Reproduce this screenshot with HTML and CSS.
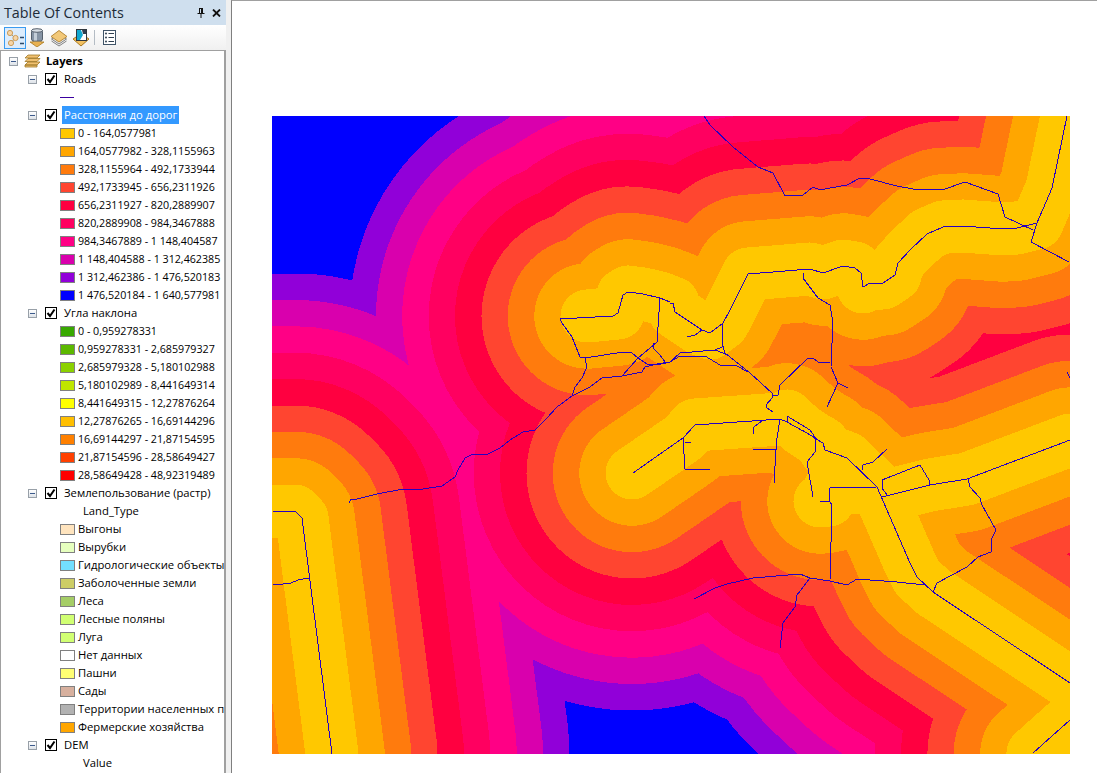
FILE: index.html
```html
<!DOCTYPE html>
<html lang="en">
<head>
  <meta charset="UTF-8" />
  <title>Table Of Contents</title>
  <link rel="stylesheet" href="styles.css">
</head>
<body>
  <svg class="sprite">
    <symbol id="check" viewBox="0 0 10 10">
      <path d="M1.5 5 L4 8 L8.5 1.5" fill="none" stroke="#000" stroke-width="2"/>
    </symbol>
  </svg>

  <div class="page">
    <div class="toc">
      <div class="titlebar">
        <span class="title">Table Of Contents</span>
        <svg class="title-icon" width="8" height="10" viewBox="0 0 8 10">
          <path d="M2 0.5H6M2.5 0.5V5.5M5.5 0.5V5.5M0.5 5.5H7.5M4 5.5V10" fill="none" stroke="#111" stroke-width="1"/>
          <rect x="4" y="1" width="1.2" height="4.5" fill="#111"/>
        </svg>
        <svg class="title-icon" width="9" height="8" viewBox="0 0 9 8">
          <path d="M1 0.5L8 7.5M8 0.5L1 7.5" fill="none" stroke="#111" stroke-width="1.8"/>
        </svg>
      </div>

      <div class="toolbar">
        <div class="tool active">
          <svg width="18" height="18" viewBox="0 0 18 18">
            <path d="M4 4L9 9L5 14" fill="none" stroke="#9a9a80" stroke-width="1"/>
            <circle cx="4" cy="4" r="2.6" fill="#f6d6a8" stroke="#cc9c58"/>
            <circle cx="9.5" cy="9" r="2.6" fill="#f6d6a8" stroke="#cc9c58"/>
            <circle cx="5" cy="14" r="2.6" fill="#f6d6a8" stroke="#cc9c58"/>
            <path d="M14 8.5H18M14 14.5H18" stroke="#2c4a6a" stroke-width="1.6"/>
          </svg>
        </div>
        <div class="tool">
          <svg width="16" height="19" viewBox="0 0 16 19">
            <path d="M4 12H12V14H15L8 19L1 14H4Z" fill="#e8b050" stroke="#a87820" stroke-width="0.8"/>
            <rect x="2.5" y="1.5" width="11" height="11.5" rx="2" fill="#8694a4" stroke="#56606c"/>
            <rect x="5" y="3" width="3" height="9.5" fill="#c4ced8"/>
            <ellipse cx="8" cy="2.5" rx="5.5" ry="1.8" fill="#d8dee4" stroke="#56606c"/>
          </svg>
        </div>
        <div class="tool">
          <svg width="18" height="18" viewBox="0 0 18 18">
            <path d="M1.5 10L9 5L16.5 10L9 15Z" fill="#e8e8e8" stroke="#808080"/>
            <path d="M1.5 12L9 17L16.5 12" fill="none" stroke="#808080"/>
            <path d="M1 7.5L9 1.5L17 7.5L9 13Z" fill="#f2c878" stroke="#b88a3a"/>
          </svg>
        </div>
        <div class="tool">
          <svg width="18" height="18" viewBox="0 0 18 18">
            <path d="M1 10L4 8H14L17 10L9 17Z" fill="#f2c060" stroke="#a87820"/>
            <rect x="4.5" y="0.5" width="10" height="11" fill="#fff" stroke="#303840"/>
            <path d="M5 1H9L11 6L8 11H5Z" fill="#10a8d0"/>
            <path d="M10 1H14V5H11Z" fill="#304050"/>
          </svg>
        </div>
        <div class="sep"></div>
        <div class="tool">
          <svg width="13" height="15" viewBox="0 0 13 15">
            <rect x="0.5" y="0.5" width="12" height="14" fill="#fff" stroke="#405468"/>
            <circle cx="3" cy="3.5" r="1" fill="#304050"/>
            <circle cx="3" cy="7.5" r="1" fill="#304050"/>
            <circle cx="3" cy="11.5" r="1" fill="#304050"/>
            <path d="M5.5 3.5H11M5.5 7.5H11M5.5 11.5H11" stroke="#304050"/>
          </svg>
        </div>
      </div>

      <div class="tree">
        <div class="row root">
          <span class="exp"></span>
          <svg class="layers-icon" width="17" height="14" viewBox="0 0 17 14">
            <path d="M4 1H16L13 4H1ZM4 4.5H16L13 7.5H1ZM4 8H16L13 11H1Z M1 11H13V13H1Z" fill="#f0c070" stroke="#a07828" stroke-width="0.8"/>
          </svg>
          <b class="root-name">Layers</b>
        </div>

        <div class="row layer"><span class="exp"></span><span class="chk"><svg width="10" height="10"><use href="#check"/></svg></span><span class="name">Roads</span></div>
        <div class="row legend"><span class="dash"></span></div>

        <div class="row layer"><span class="exp"></span><span class="chk"><svg width="10" height="10"><use href="#check"/></svg></span><span class="name selected">Расстояния до дорог</span></div>
        <div class="row legend num"><span class="sw d1"></span>0 - 164,0577981</div>
        <div class="row legend num"><span class="sw d2"></span>164,0577982 - 328,1155963</div>
        <div class="row legend num"><span class="sw d3"></span>328,1155964 - 492,1733944</div>
        <div class="row legend num"><span class="sw d4"></span>492,1733945 - 656,2311926</div>
        <div class="row legend num"><span class="sw d5"></span>656,2311927 - 820,2889907</div>
        <div class="row legend num"><span class="sw d6"></span>820,2889908 - 984,3467888</div>
        <div class="row legend num"><span class="sw d7"></span>984,3467889 - 1 148,404587</div>
        <div class="row legend num"><span class="sw d8"></span>1 148,404588 - 1 312,462385</div>
        <div class="row legend num"><span class="sw d9"></span>1 312,462386 - 1 476,520183</div>
        <div class="row legend num"><span class="sw d10"></span>1 476,520184 - 1 640,577981</div>

        <div class="row layer"><span class="exp"></span><span class="chk"><svg width="10" height="10"><use href="#check"/></svg></span><span class="name">Угла наклона</span></div>
        <div class="row legend num"><span class="sw s1"></span>0 - 0,959278331</div>
        <div class="row legend num"><span class="sw s2"></span>0,959278331 - 2,685979327</div>
        <div class="row legend num"><span class="sw s3"></span>2,685979328 - 5,180102988</div>
        <div class="row legend num"><span class="sw s4"></span>5,180102989 - 8,441649314</div>
        <div class="row legend num"><span class="sw s5"></span>8,441649315 - 12,27876264</div>
        <div class="row legend num"><span class="sw s6"></span>12,27876265 - 16,69144296</div>
        <div class="row legend num"><span class="sw s7"></span>16,69144297 - 21,87154595</div>
        <div class="row legend num"><span class="sw s8"></span>21,87154596 - 28,58649427</div>
        <div class="row legend num"><span class="sw s9"></span>28,58649428 - 48,92319489</div>

        <div class="row layer"><span class="exp"></span><span class="chk"><svg width="10" height="10"><use href="#check"/></svg></span><span class="name">Землепользование (растр)</span></div>
        <div class="row field">Land_Type</div>
        <div class="row legend"><span class="sw l1"></span>Выгоны</div>
        <div class="row legend"><span class="sw l2"></span>Вырубки</div>
        <div class="row legend"><span class="sw l3"></span>Гидрологические объекты</div>
        <div class="row legend"><span class="sw l4"></span>Заболоченные земли</div>
        <div class="row legend"><span class="sw l5"></span>Леса</div>
        <div class="row legend"><span class="sw l6"></span>Лесные поляны</div>
        <div class="row legend"><span class="sw l6"></span>Луга</div>
        <div class="row legend"><span class="sw l7"></span>Нет данных</div>
        <div class="row legend"><span class="sw l8"></span>Пашни</div>
        <div class="row legend"><span class="sw l9"></span>Сады</div>
        <div class="row legend"><span class="sw l10"></span>Территории населенных п</div>
        <div class="row legend"><span class="sw d2"></span>Фермерские хозяйства</div>

        <div class="row layer"><span class="exp"></span><span class="chk"><svg width="10" height="10"><use href="#check"/></svg></span><span class="name">DEM</span></div>
        <div class="row field">Value</div>
      </div>
    </div>

    <div class="splitter"></div>

    <div class="map-area">
      <svg class="map" width="798" height="638" viewBox="272 116 798 638">
        <defs>
          <!-- roads the distance raster was built from -->
          <path id="src" d="M272 511L295 511L302 518L332 754
            M1067 116L1052 188L1037 223L1017 228L1003 229L963 226L943 227L927 234L910 250L898 263L895 275L883 283L870 283L863 287L861 273L855 268L843 266L823 273L810 269L748 274L730 310L723 323L710 333L702 330L675 312L673 303L660 298L643 294L628 292L623 295L618 313L587 316
            M632 473L670 447L683 438L695 425L780 419L787 416L802 430L816 439L823 443L825 450L847 458L877 487L890 517L910 563L917 577L933 592L1070 683
            M882 497L930 485L967 479L1070 440
            M877 487L830 488L829 500L820 501
            M1070 720L1033 753"/>
        </defs>

        <rect class="bg" x="272" y="116" width="798" height="638"/>
        <g class="bands">
          <use href="#src" stroke="#9100d9" stroke-width="475"/>
          <use href="#src" stroke="#d900ad" stroke-width="422"/>
          <use href="#src" stroke="#ff0085" stroke-width="369.5"/>
          <use href="#src" stroke="#ff0060" stroke-width="316.5"/>
          <use href="#src" stroke="#ff0040" stroke-width="264"/>
          <use href="#src" stroke="#ff4530" stroke-width="211"/>
          <use href="#src" stroke="#ff7b0d" stroke-width="158.5"/>
          <use href="#src" stroke="#ffa600" stroke-width="105.5"/>
          <use href="#src" stroke="#ffc800" stroke-width="53"/>
        </g>

        <g class="roads">
          <path d="M273 511L295 511L302 518L332 754"/>
          <path d="M273 585L283 584L291 583L298 580L309 578"/>
          <path d="M349 503L351 499L357 499L377 494L403 489L423 489L442 486L455 477L458 470L465 458L473 454L488 454L500 448L510 440L523 432L535 430L547 418L557 407L572 396L590 387L602 378L622 376L642 372L645 367L657 364L670 362"/>
          <path d="M670 302L660 298L643 294L628 292L623 295L618 313L613 316L560 319L562 323L572 337L580 357L585 358L587 367L582 378L575 387L572 396"/>
          <path d="M585 358L623 352L632 353L638 358L647 364L657 365L670 362"/>
          <path d="M622 376L638 358L650 348L657 342L660 298"/>
          <path d="M653 343L653 348L660 355L665 362L670 362"/>
          <path d="M670 303L673 303L675 312L702 330L710 333L723 323L730 310L748 274L810 269L823 273L843 266L855 268L861 273L863 287L870 283L883 283L895 275L898 263L910 250L927 234L943 227L963 226L1003 229L1017 228L1037 223"/>
          <path d="M687 337L695 335L702 330"/>
          <path d="M723 323L722 343L725 353L750 373L772 393L773 397L766 405L767 408L773 412"/>
          <path d="M670 362L680 353L715 350L722 347L723 343"/>
          <path d="M670 362L680 356L705 356L720 365L737 366L748 372"/>
          <path d="M715 350L728 355"/>
          <path d="M773 396L778 395L780 385L808 358L813 358L818 362L830 363"/>
          <path d="M803 273L803 278L818 298L830 305L833 323L832 343L831 367L838 383L848 388"/>
          <path d="M838 383L827 407"/>
          <path d="M704 116L710 125L733 147L758 167L773 173L785 196L803 195L813 187L820 190L830 188L847 185L860 178L870 179L897 186L913 189L945 189L965 182L998 194L1005 217L1033 230"/>
          <path d="M1067 116L1052 188L1037 223L1031 242L1069 262"/>
          <path d="M1067 372L1070 378"/>
          <path d="M633 473L670 447L683 438L695 425L780 419"/>
          <path d="M787 416L810 430L817 440"/>
          <path d="M780 419L787 422L812 436"/>
          <path d="M787 416L787 422"/>
          <path d="M763 420L754 427L753 434"/>
          <path d="M780 419L777 438L776 450L774 483"/>
          <path d="M753 449L776 449"/>
          <path d="M683 438L685 469L710 469"/>
          <path d="M685 443L691 442"/>
          <path d="M802 430L812 436L816 439L815 452L807 462L813 497"/>
          <path d="M816 439L823 443L825 450L847 458L877 487L890 517L910 563L917 577L933 592L1070 683"/>
          <path d="M862 470L863 465L873 462L887 449"/>
          <path d="M877 487L830 488L829 500L832 505L830 580"/>
          <path d="M820 501L829 501"/>
          <path d="M882 497L930 485L967 479L1070 440"/>
          <path d="M887 495L882 488L882 480L920 465L929 480L929 485"/>
          <path d="M968 479L970 487L980 498L982 505L996 530L991 540L991 552L978 557L967 567L937 583L933 592"/>
          <path d="M694 599L715 588L727 584L753 578L800 574L810 578L830 581L847 585L857 579L897 582L925 585"/>
          <path d="M810 578L797 595L795 607L783 623L780 648"/>
          <path d="M1070 720L1033 753"/>
        </g>
      </svg>
    </div>
  </div>
</body>
</html>
```

FILE: styles.css
```css
html, body {
  margin: 0;
  height: 100%;
  overflow: hidden;
  background: #fff;
}
body {
  font-family: "Open Sans", Arial, sans-serif;
  font-size: 11.25px;
  color: #000;
}
.sprite {
  display: none;
}
.page {
  display: flex;
  height: 773px;
}

/* left panel */
.toc {
  width: 226px;
  display: flex;
  flex-direction: column;
  flex-shrink: 0;
}
.titlebar {
  height: 25px;
  background: #cfdfee;
  display: flex;
  align-items: center;
  padding: 0 5px 0 4px;
  gap: 7px;
}
.title {
  font-family: "Open Sans", sans-serif;
  font-size: 14.3px;
  color: #1d2b38;
  flex: 1;
}
.toolbar {
  height: 25px;
  background: linear-gradient(#ffffff, #f0f0f0);
  display: flex;
  align-items: center;
  padding-left: 4px;
}
.tool {
  width: 22px;
  height: 22px;
  display: flex;
  align-items: center;
  justify-content: center;
  box-sizing: border-box;
}
.tool.active {
  background: #dcecfc;
  border: 1px solid #3a9bf0;
}
.sep {
  width: 1px;
  height: 15px;
  background: #b4bcc4;
  margin: 0 3px 0 2px;
}
.tree {
  flex: 1;
  min-height: 0;
  overflow: hidden;
  border: 1px solid #a0a0a0;
  border-bottom: none;
  border-right-width: 2px;
  padding-top: 1px;
  background: #fff;
}
.row {
  height: 18px;
  line-height: 18px;
  display: flex;
  align-items: center;
  white-space: nowrap;
}
.num {
  font-size: 10.7px;
}
.root {
  padding-left: 8px;
}
.layer {
  padding-left: 27px;
}
.legend {
  padding-left: 59px;
}
.field {
  padding-left: 82px;
}
.exp {
  width: 7px;
  height: 7px;
  border: 1px solid #98a0a8;
  background: linear-gradient(#ffffff, #dde2e8);
  display: flex;
  align-items: center;
  justify-content: center;
  flex-shrink: 0;
}
.exp::after {
  content: "";
  width: 5px;
  height: 1px;
  background: #3c5a8c;
}
.layers-icon {
  margin-left: 6px;
}
.root-name {
  margin-left: 5px;
}
.chk {
  width: 10px;
  height: 10px;
  border: 1px solid #000;
  background: #fff;
  margin-left: 8px;
  flex-shrink: 0;
}
.chk svg {
  display: block;
}
.name {
  margin-left: 5px;
  padding: 0 2px;
}
.selected {
  background: #3399ff;
  color: #fff;
}
.dash {
  width: 14px;
  height: 1px;
  background: #3a00a0;
}
.sw {
  width: 13px;
  height: 9px;
  border: 1px solid #808080;
  margin-right: 3px;
  flex-shrink: 0;
}
.d1 { background: #ffc800; }
.d2 { background: #ffa600; }
.d3 { background: #ff7b0d; }
.d4 { background: #ff4530; }
.d5 { background: #ff0040; }
.d6 { background: #ff0060; }
.d7 { background: #ff0085; }
.d8 { background: #d900ad; }
.d9 { background: #9100d9; }
.d10 { background: #0000ff; }
.s1 { background: #38a800; }
.s2 { background: #5cb800; }
.s3 { background: #8bd100; }
.s4 { background: #c0e600; }
.s5 { background: #ffff00; }
.s6 { background: #ffbf00; }
.s7 { background: #ff8000; }
.s8 { background: #ff4000; }
.s9 { background: #ff0000; }
.l1 { background: #ffe4be; }
.l2 { background: #e6ffbe; }
.l3 { background: #73dfff; }
.l4 { background: #cdcd66; }
.l5 { background: #a5cd66; }
.l6 { background: #d1ff73; }
.l7 { background: #ffffff; }
.l8 { background: #ffff73; }
.l9 { background: #d7b09e; }
.l10 { background: #b2b2b2; }

/* splitter and map */
.splitter {
  width: 5px;
  background: #f0f0f0;
  flex-shrink: 0;
}
.map-area {
  flex: 1;
  border-left: 1px solid #7f7f7f;
  border-top: 1px solid #a0a0a0;
  padding: 115px 0 0 40px;
  min-width: 0;
}
.map {
  display: block;
}
.bg {
  fill: #0000ff;
}
.bands {
  shape-rendering: crispEdges;
}
.bands use {
  fill: none;
  stroke-linejoin: round;
  stroke-linecap: round;
}
.roads path {
  fill: none;
  stroke: #2800c0;
  stroke-width: 1;
  shape-rendering: crispEdges;
}
```
